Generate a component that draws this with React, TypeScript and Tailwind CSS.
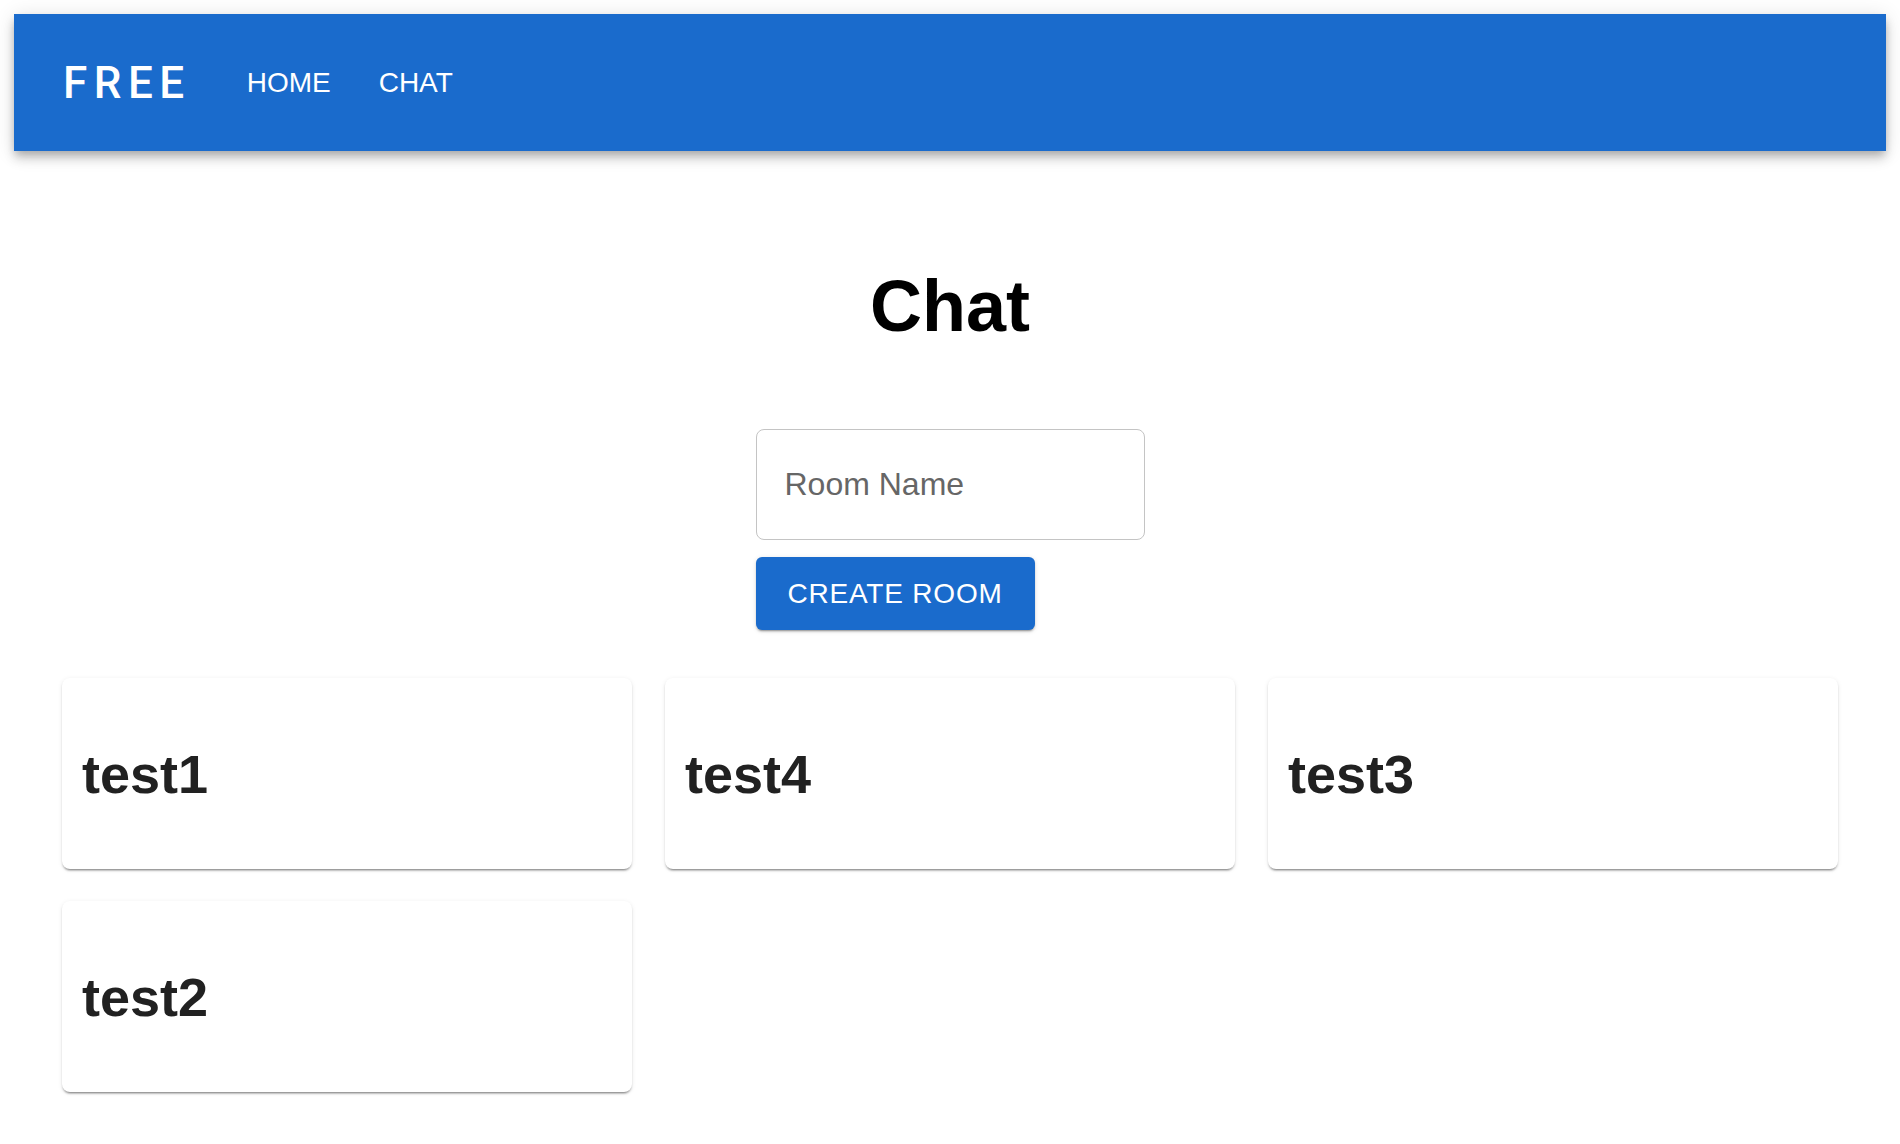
import React, { useState } from 'react';

const rooms = [
  { id: 'r1', name: 'test1' },
  { id: 'r4', name: 'test4' },
  { id: 'r3', name: 'test3' },
  { id: 'r2', name: 'test2' },
];

const App: React.FC = () => {
  const [roomName, setRoomName] = useState('');

  return (
    <div className="min-h-screen bg-white p-[14px] font-['Liberation_Sans',Arial,sans-serif]">
      <header className="flex h-[137px] items-center bg-[#1a6bcc] px-[49px] text-white shadow-[0_4px_8px_-2px_rgba(0,0,0,0.2),0_8px_10px_0_rgba(0,0,0,0.14),0_2px_20px_0_rgba(0,0,0,0.12)]">
        <span className="font-['Roboto',sans-serif] text-[44px] font-medium leading-none tracking-[6.5px]">FREE</span>
        <nav className="ml-[56px] flex items-center gap-[48px] text-[28px] leading-none">
          <a href="#" className="uppercase">Home</a>
          <a href="#" className="uppercase">Chat</a>
        </nav>
      </header>

      <main className="px-[48px]">
        <h1 className="mt-[119px] text-center text-[72px] font-bold leading-[72px] text-black">Chat</h1>

        <div className="mx-auto mt-[87px] flex w-[389px] flex-col items-start">
          <input
            value={roomName}
            onChange={(e) => setRoomName(e.target.value)}
            placeholder="Room Name"
            className="h-[111px] w-full rounded-[8px] border-[1.5px] border-[#c4c4c4] px-[28px] text-[32px] text-[#222] outline-none placeholder:text-[#666]"
          />
          <button className="mt-[17px] flex h-[73px] w-[279px] items-center justify-center rounded-[6px] bg-[#1a6bcc] text-[28px] tracking-[0.8px] text-white shadow-[0_3px_1px_-2px_rgba(0,0,0,0.2),0_2px_2px_0_rgba(0,0,0,0.14),0_1px_5px_0_rgba(0,0,0,0.12)]">
            CREATE ROOM
          </button>
        </div>

        <div className="mt-[48px] grid grid-cols-3 gap-x-[33px] gap-y-[32px]">
          {rooms.map((room) => (
            <div
              key={room.id}
              className="flex h-[191px] items-center rounded-[8px] bg-white pl-[20px] shadow-[0_3px_2px_-2px_rgba(0,0,0,0.35),0_2px_2px_0_rgba(0,0,0,0.14),0_1px_5px_0_rgba(0,0,0,0.08)]"
            >
              <p className="text-[54px] font-semibold leading-none text-[#212121]">{room.name}</p>
            </div>
          ))}
        </div>
      </main>
    </div>
  );
};

export default App;
